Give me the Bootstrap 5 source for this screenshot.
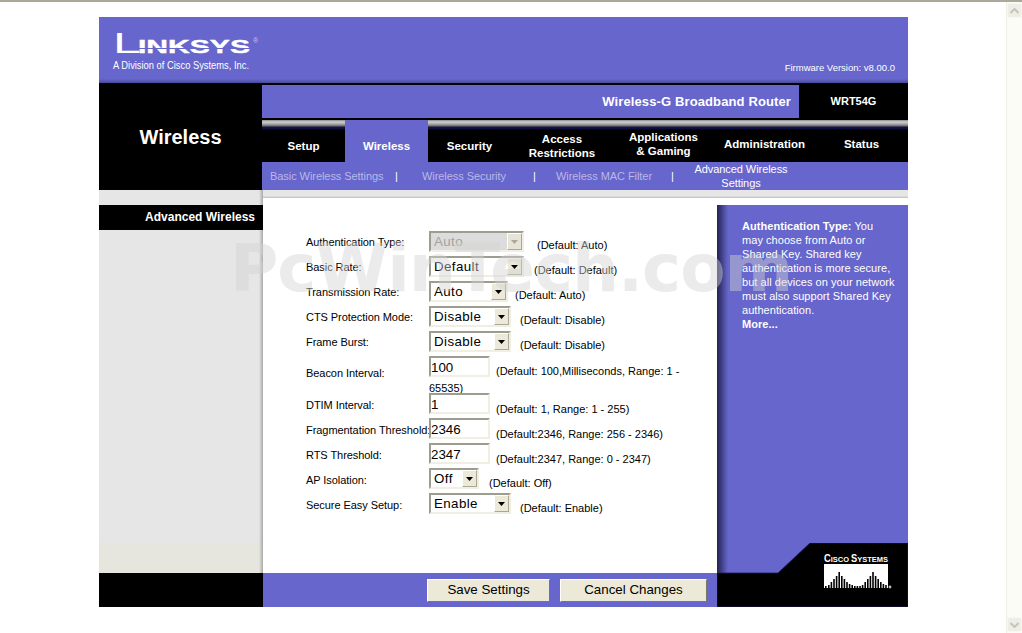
<!DOCTYPE html>
<html lang="en">
<head>
  <meta charset="UTF-8">
  <title>Wireless-G Broadband Router - Advanced Wireless</title>
  <meta name="viewport" content="width=device-width, initial-scale=1">
  <link href="https://cdn.jsdelivr.net/npm/bootstrap@5.3.2/dist/css/bootstrap.min.css" rel="stylesheet">
  <style>
    html, body { height: 100%; overflow: hidden; }
    body { background: #fff; color: #000; font: 11px/14px "Liberation Sans", Arial, sans-serif; border-top: 2px solid #aca899; }
    a { color: inherit; text-decoration: none; }

    .rt-frame { position: relative; width: 809px; margin: 15px 0 0 99px; }
    .rt-head { height: 66px; background: linear-gradient(180deg, #6666cc 62px, #4a4a99 66px); padding: 8px 13px 0 13px; }
    .rt-firmware { color: #fff; font-size: 9.500px; line-height: 12px; padding-top: 37px; }

    .rt-band { height: 107px; background: #000; }
    .rt-section { width: 163px; color: #fff; font-size: 20px; font-weight: 700; line-height: 24px; padding-top: 42px; text-align: center; }
    .rt-top { width: 646px; padding-top: 2px; }
    .rt-title { height: 33px; }
    .rt-product { width: 537px; background: #6666cc; color: #fff; font-size: 13px; font-weight: 700; letter-spacing: .12px; text-align: right; padding-right: 8px; line-height: 33px; }
    .rt-model { width: 109px; color: #fff; font-size: 11px; font-weight: 700; text-align: center; line-height: 33px; }

    .rt-tabs { height: 42px; margin-top: 2px; background: #000 linear-gradient(180deg, #8c8c8c 0, #cfcfcf 2px, #a8a8a8 4px, #6a6a6a 6px, #15154a 7px, #0c0c3a 9px, #000 10px) no-repeat 0 0 / 100% 10px; }
    .rt-tab { height: 42px; padding-top: 10px; color: #fff; font-size: 11.500px; font-weight: 700; line-height: 14px; text-align: center; display: flex; align-items: center; justify-content: center; }
    .rt-tab.active-tab { background: #6666cc; }
    .rt-tab.lift { padding-bottom: 4px; }
    .tw-83 { width: 83px; }
    .tw-102 { width: 102px; }
    .tw-101 { width: 101px; }
    .tw-93 { width: 93px; }

    .rt-subnav { height: 28px; background: #6666cc; padding-left: 8px; color: #b9b9e6; font-size: 11px; line-height: 14px; letter-spacing: -.06px; }
    .sn-1 { width: 125px; }
    .sn-2 { width: 111px; }
    .sn-3 { width: 115px; }
    .sn-4 { width: 100px; color: #fff; text-align: center; }
    .sep { color: #fff; }
    .sep-a { width: 27px; }
    .sep-b { width: 23px; }
    .sep-c { width: 20px; }

    .rt-body { height: 383px; }
    .rt-side { width: 164px; }
    .side-gap { height: 15px; background: linear-gradient(90deg, #e6e6e6 160px, #a8a8a8 164px); }
    .side-title { height: 25px; background: #000; color: #fff; font-size: 12px; font-weight: 700; line-height: 25px; text-align: right; padding-right: 8px; }
    .side-fill { height: 313px; background: linear-gradient(90deg, #e6e6e6 160px, #a8a8a8 164px); }
    .side-foot { height: 30px; background: linear-gradient(90deg, #e6e6de 160px, #a8a8a8 164px); }

    .rt-content { width: 645px; }
    .content-gap { height: 8px; background: linear-gradient(180deg, #e6e6e6 6px, #bcbcbc 8px); }
    .rt-form { width: 454px; height: 375px; background: #fff; padding: 33px 0 0 43px; }
    .form-line { height: 25px; }
    .form-line.tall { height: 37px; }
    .form-line label { width: 123px; margin: 0; padding-top: 4px; white-space: nowrap; letter-spacing: -.06px; }
    .form-line.low label { padding-top: 5px; }
    .form-line.tall label { padding-top: 10px; }
    .form-value { width: 252px; }
    .hint { vertical-align: -3px; }
    .hint.lower { vertical-align: -4px; }

    .sel-wrap { position: relative; display: inline-block; }
    .form-select.rt-sel, .form-control.rt-input { display: inline-block; height: 21px; min-height: 0; padding: 1px 0 0 3px; font: 13.330px/16px "Liberation Sans", Arial, sans-serif; letter-spacing: .4px; color: #000; border-radius: 0; background-image: none; background-color: #fff; border: 2px solid; border-color: #9d9d8f #f1efe2 #f1efe2 #9d9d8f; box-shadow: none; }
    .form-control.rt-input { width: 61px; padding-left: 0; letter-spacing: 0; margin-right: 6px; vertical-align: baseline; }
    .form-select.rt-sel:disabled { background: #dcdcdc; color: #a3a39a; }
    .sel-arrow { position: absolute; top: 2px; right: 2px; width: 15px; height: 17px; background: #ece9d8; border: 1px solid; border-color: #fff #aca899 #aca899 #fff; display: flex; align-items: center; justify-content: center; pointer-events: none; }
    .sel-arrow.off { background: #e6e4d8; }
    .s-94 { width: 95px; margin-right: 13px; }
    .s-94b { width: 95px; margin-right: 10px; }
    .s-79 { width: 79px; margin-right: 7px; }
    .s-82 { width: 82px; margin-right: 9px; }
    .s-50 { width: 50px; margin-right: 10px; }

    .rt-help { width: 191px; background: #fff; padding-top: 7px; position: relative; }
    .help-box { height: 368px; background: linear-gradient(90deg, #22224f 0, #3a3a80 4px, #5555aa 8px, #6666cc 11px); color: #fff; padding: 14px 0 0 25px; font-size: 11px; line-height: 14px; letter-spacing: .05px; }
    .cisco-corner { position: absolute; left: 0; bottom: -34px; display: block; }

    .rt-foot { height: 34px; background: #000; }
    .foot-left { width: 164px; }
    .foot-mid { width: 454px; background: #6666cc; padding-right: 10px; gap: 10px; }
    .rt-btn { height: 23px; padding: 0; font: 13.330px/18px "Liberation Sans", Arial, sans-serif; color: #000; background: #ece9d8; border: 1px solid; border-color: #fff #77776a #77776a #fff; border-radius: 0; }
    .btn-save { width: 123px; }
    .btn-cancel { width: 147px; }

    .rt-mark { position: absolute; left: 131px; top: 217px; font: 700 66px/70px "DejaVu Sans", sans-serif; color: rgba(210, 210, 210, .45); white-space: nowrap; pointer-events: none; letter-spacing: -1px; }

    .fake-scroll { position: fixed; top: 2px; right: 0; bottom: 0; width: 16px; background: #fcfcf7; border-left: 1px solid #efefe6; }
    .scroll-btn { position: absolute; left: 0; width: 15px; height: 15px; background: #efeee6; border: 1px solid #f8f8f2; border-radius: 2px; display: flex; align-items: center; justify-content: center; }
    .scroll-up { top: 1px; }
    .scroll-down { bottom: 1px; }
  </style>
</head>
<body>

  <div class="rt-frame">
    <!-- logo strip -->
    <div class="rt-head d-flex justify-content-between">
      <svg width="180" height="50" viewBox="0 0 180 50" role="img" aria-label="Linksys">
        <g fill="#fff" font-family="'Liberation Sans', sans-serif">
          <text x="1" y="28" font-size="29" textLength="28" lengthAdjust="spacingAndGlyphs">L</text>
          <text x="26" y="28" font-size="19" font-weight="700" stroke="#fff" stroke-width=".4" textLength="112" lengthAdjust="spacingAndGlyphs">INKSYS</text>
          <text x="141" y="18" font-size="7" fill="#c6c6ee">®</text>
          <text x="1" y="44" font-size="11" textLength="136" lengthAdjust="spacingAndGlyphs">A Division of Cisco Systems, Inc.</text>
        </g>
        <rect x="20" y="23" width="120" height="1" fill="#6666cc"/>
      </svg>
      <div class="rt-firmware">Firmware Version: v8.00.0</div>
    </div>

    <!-- black band with section name and tabs -->
    <div class="rt-band d-flex">
      <div class="rt-section">Wireless</div>
      <div class="rt-top">
        <div class="rt-title d-flex">
          <div class="rt-product">Wireless-G Broadband Router</div>
          <div class="rt-model">WRT54G</div>
        </div>
        <nav class="rt-tabs d-flex">
          <a class="rt-tab tw-83" href="#">Setup</a>
          <a class="rt-tab tw-83 active-tab" href="#">Wireless</a>
          <a class="rt-tab tw-83" href="#">Security</a>
          <a class="rt-tab tw-102" href="#">Access<br>Restrictions</a>
          <a class="rt-tab tw-101 lift" href="#">Applications<br>&amp; Gaming</a>
          <a class="rt-tab tw-101 lift" href="#">Administration</a>
          <a class="rt-tab tw-93 lift" href="#">Status</a>
        </nav>
        <div class="rt-subnav d-flex align-items-center">
          <a class="sn-1" href="#">Basic Wireless Settings</a><span class="sep sep-a">|</span>
          <a class="sn-2" href="#">Wireless Security</a><span class="sep sep-b">|</span>
          <a class="sn-3" href="#">Wireless MAC Filter</a><span class="sep sep-c">|</span>
          <a class="sn-4" href="#">Advanced Wireless Settings</a>
        </div>
      </div>
    </div>

    <!-- main area -->
    <div class="rt-body d-flex">
      <div class="rt-side">
        <div class="side-gap"></div>
        <div class="side-title">Advanced Wireless</div>
        <div class="side-fill"></div>
        <div class="side-foot"></div>
      </div>
      <div class="rt-content">
        <div class="content-gap"></div>
        <div class="d-flex">
          <form class="rt-form">
            <div class="form-line d-flex">
              <label>Authentication Type:</label>
              <div class="form-value">
                <span class="sel-wrap s-94"><select class="form-select rt-sel" disabled><option>Auto</option></select><span class="sel-arrow off"><svg width="7" height="4"><path d="M0 0h7L3.500 4z" fill="#aca899"/></svg></span></span><span class="hint">(Default: Auto)</span>
              </div>
            </div>
            <div class="form-line d-flex">
              <label>Basic Rate:</label>
              <div class="form-value">
                <span class="sel-wrap s-94b"><select class="form-select rt-sel"><option>Default</option></select><span class="sel-arrow"><svg width="7" height="4"><path d="M0 0h7L3.500 4z"/></svg></span></span><span class="hint">(Default: Default)</span>
              </div>
            </div>
            <div class="form-line d-flex">
              <label>Transmission Rate:</label>
              <div class="form-value">
                <span class="sel-wrap s-79"><select class="form-select rt-sel"><option>Auto</option></select><span class="sel-arrow"><svg width="7" height="4"><path d="M0 0h7L3.500 4z"/></svg></span></span><span class="hint">(Default: Auto)</span>
              </div>
            </div>
            <div class="form-line d-flex">
              <label>CTS Protection Mode:</label>
              <div class="form-value">
                <span class="sel-wrap s-82"><select class="form-select rt-sel"><option>Disable</option></select><span class="sel-arrow"><svg width="7" height="4"><path d="M0 0h7L3.500 4z"/></svg></span></span><span class="hint">(Default: Disable)</span>
              </div>
            </div>
            <div class="form-line d-flex">
              <label>Frame Burst:</label>
              <div class="form-value">
                <span class="sel-wrap s-82"><select class="form-select rt-sel"><option>Disable</option></select><span class="sel-arrow"><svg width="7" height="4"><path d="M0 0h7L3.500 4z"/></svg></span></span><span class="hint">(Default: Disable)</span>
              </div>
            </div>
            <div class="form-line tall d-flex">
              <label>Beacon Interval:</label>
              <div class="form-value">
                <input class="form-control rt-input" value="100"><span class="hint">(Default: 100,Milliseconds, Range: 1 - 65535)</span>
              </div>
            </div>
            <div class="form-line low d-flex">
              <label>DTIM Interval:</label>
              <div class="form-value">
                <input class="form-control rt-input" value="1"><span class="hint lower">(Default: 1, Range: 1 - 255)</span>
              </div>
            </div>
            <div class="form-line low d-flex">
              <label>Fragmentation Threshold:</label>
              <div class="form-value">
                <input class="form-control rt-input" value="2346"><span class="hint lower">(Default:2346, Range: 256 - 2346)</span>
              </div>
            </div>
            <div class="form-line low d-flex">
              <label>RTS Threshold:</label>
              <div class="form-value">
                <input class="form-control rt-input" value="2347"><span class="hint lower">(Default:2347, Range: 0 - 2347)</span>
              </div>
            </div>
            <div class="form-line low d-flex">
              <label>AP Isolation:</label>
              <div class="form-value">
                <span class="sel-wrap s-50"><select class="form-select rt-sel"><option>Off</option></select><span class="sel-arrow"><svg width="7" height="4"><path d="M0 0h7L3.500 4z"/></svg></span></span><span class="hint lower">(Default: Off)</span>
              </div>
            </div>
            <div class="form-line low d-flex">
              <label>Secure Easy Setup:</label>
              <div class="form-value">
                <span class="sel-wrap s-82"><select class="form-select rt-sel"><option>Enable</option></select><span class="sel-arrow"><svg width="7" height="4"><path d="M0 0h7L3.500 4z"/></svg></span></span><span class="hint lower">(Default: Enable)</span>
              </div>
            </div>
          </form>

          <div class="rt-help">
            <div class="help-box">
              <b>Authentication Type:</b> You<br>
              may choose from Auto or<br>
              Shared Key. Shared key<br>
              authentication is more secure,<br>
              but all devices on your network<br>
              must also support Shared Key<br>
              authentication.<br>
              <a href="#"><b>More...</b></a>
            </div>
            <svg class="cisco-corner" width="191" height="64" viewBox="0 0 191 64" role="img" aria-label="Cisco Systems">
              <path d="M0 30H61L93 0H191V64H0z" fill="#000" stroke="#1c1c5c" stroke-width=".8"/>
              <text x="107" y="19" fill="#fff" font-family="'Liberation Sans', sans-serif" font-weight="700" font-size="8" textLength="64" lengthAdjust="spacingAndGlyphs"><tspan font-size="10">C</tspan>ISCO <tspan font-size="10">S</tspan>YSTEMS</text>
              <rect x="107" y="21" width="64" height="24" fill="#fff"/>
              <path fill="#000" d="M108 43h1.600v2H108zM111 42h1.600v3H111zM113.600 39h1.600v6h-1.600zM116.200 36h1.600v9h-1.600zM118.800 33h1.600v12h-1.600zM121.400 29h1.600v16h-1.600zM124 33h1.600v12H124zM126.600 36h1.600v9h-1.600zM129.200 39h1.600v6h-1.600zM131.800 41h1.600v4h-1.600zM134.400 42h1.600v3h-1.600zM137 43h1.600v2H137zM139.600 43h1.600v2h-1.600zM142.200 43h1.600v2h-1.600zM144.800 42h1.600v3h-1.600zM147.400 39h1.600v6h-1.600zM150 36h1.600v9H150zM152.600 33h1.600v12h-1.600zM155.200 29h1.600v16h-1.600zM157.800 33h1.600v12h-1.600zM160.400 36h1.600v9h-1.600zM163 39h1.600v6H163zM165.600 41h1.600v4h-1.600zM168.200 42h1.600v3h-1.600z"/>
              <circle cx="173" cy="44" r="1.400" fill="#bbb"/>
            </svg>
          </div>
        </div>
      </div>
    </div>

    <!-- save / cancel -->
    <div class="rt-foot d-flex">
      <div class="foot-left"></div>
      <div class="foot-mid d-flex align-items-center justify-content-end">
        <button type="button" class="btn rt-btn btn-save">Save Settings</button>
        <button type="button" class="btn rt-btn btn-cancel">Cancel Changes</button>
      </div>
    </div>

    <div class="rt-mark">PcWinTech.com</div>
  </div>

  <div class="fake-scroll">
    <div class="scroll-btn scroll-up"><svg width="9" height="6"><path d="M.5 5L4.500 1l4 4" fill="none" stroke="#c4c4b8" stroke-width="2"/></svg></div>
    <div class="scroll-btn scroll-down"><svg width="9" height="6"><path d="M.5 1l4 4 4-4" fill="none" stroke="#c4c4b8" stroke-width="2"/></svg></div>
  </div>

  <script src="https://cdn.jsdelivr.net/npm/bootstrap@5.3.2/dist/js/bootstrap.bundle.min.js"></script>
</body>
</html>
